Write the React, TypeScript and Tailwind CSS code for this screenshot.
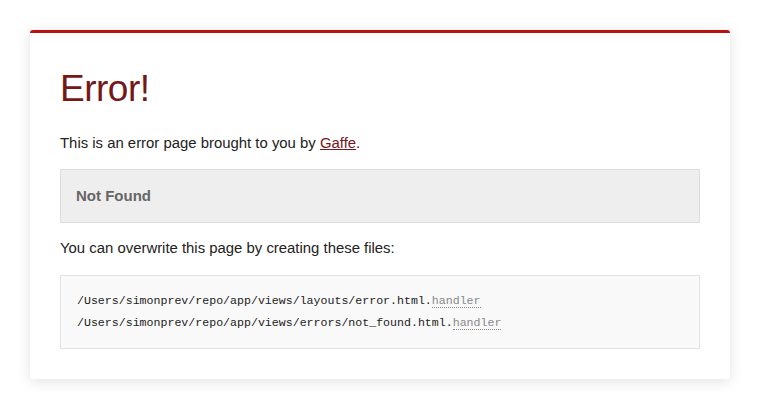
import React from 'react';

const files = [
    '/Users/simonprev/repo/app/views/layouts/error.html.',
    '/Users/simonprev/repo/app/views/errors/not_found.html.',
];

const App: React.FC = () => {
    return (
        <div className="min-h-[407px] bg-white pt-[30px] font-['Liberation_Sans',Arial,sans-serif] text-[#222]">
            <div className="mx-auto w-[700px] rounded-[3px] border-t-[3px] border-[#b8120c] bg-white px-[30px] pt-[34px] pb-[30px] shadow-[0_2px_14px_rgba(0,0,0,0.12)]">
                <h1 className="text-[37px] font-light leading-[44px] tracking-[-0.5px] text-[#741818]">Error!</h1>

                <p className="mt-[22px] text-[14.9px] leading-[20px]">
                    This is an error page brought to you by{' '}
                    <a href="#" className="text-[#741818] underline">Gaffe</a>.
                </p>

                <div className="mt-[16px] flex h-[54px] items-center border border-[#dcdcdc] bg-[#eeeeee] px-[15px]">
                    <span className="text-[15px] font-bold text-[#666]">Not Found</span>
                </div>

                <p className="mt-[15px] text-[14.9px] leading-[20px]">
                    You can overwrite this page by creating these files:
                </p>

                <div className="mt-[17px] border border-[#e2e2e2] bg-[#f9f9f9] px-[16px] py-[14px] font-['Liberation_Mono','Courier_New',monospace] text-[11.6px] leading-[22px] text-[#222]">
                    {files.map((f) => (
                        <div key={f}>
                            {f}
                            <span className="border-b border-dotted border-[#888] text-[#888]">handler</span>
                        </div>
                    ))}
                </div>
            </div>
        </div>
    );
};

export default App;
